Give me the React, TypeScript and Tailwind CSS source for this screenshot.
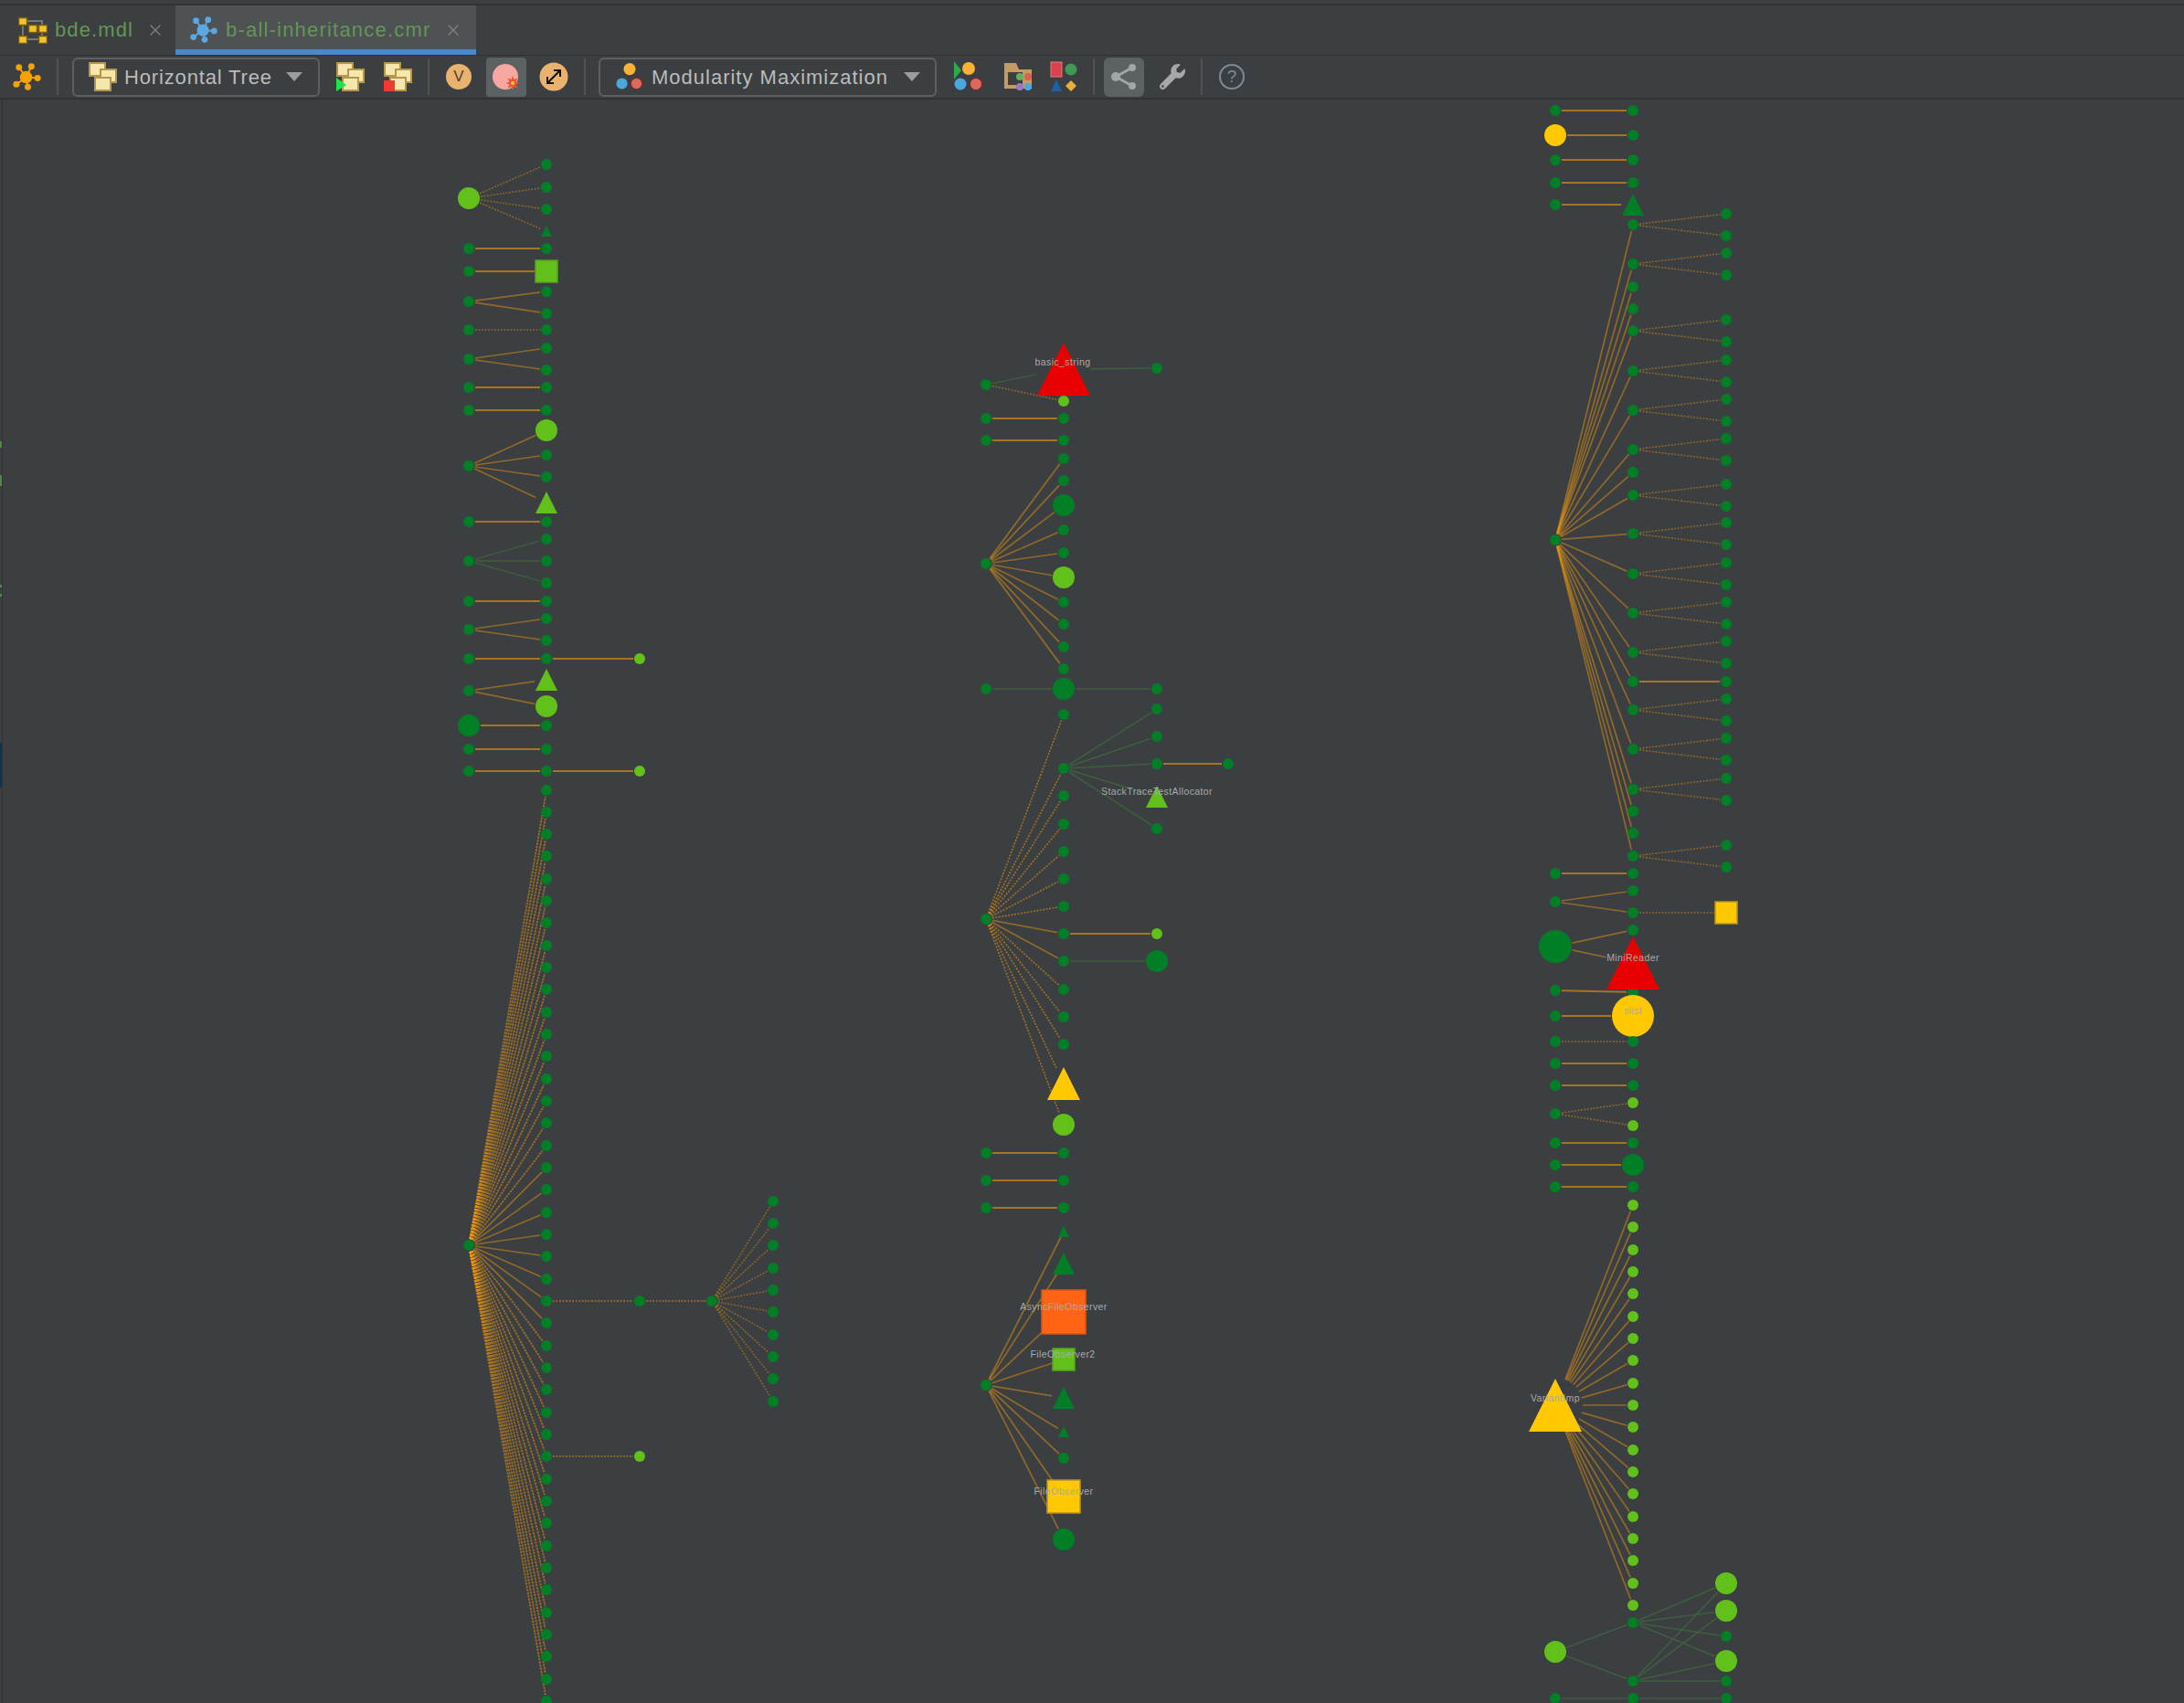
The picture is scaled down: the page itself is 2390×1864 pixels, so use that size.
import React from "react";
import { FaWrench } from "react-icons/fa";
import { X } from "lucide-react";

type Kind = "c" | "s" | "t";
type Style = "solid" | "dash" | "dots" | "fan" | "root" | "green";
type GNode = { x: number; y: number; r: number; kind: Kind; color: string };
type GEdge = { a: GNode; b: GNode; style: Style };

const DARK = "#017f27";
const LIGHT = "#62c01a";
const YELLOW = "#ffc800";
const RED = "#e60000";
const ORANGE = "#ff6414";

const nodes: GNode[] = [];
const edges: GEdge[] = [];

function n(x: number, y: number, r = 6, kind: Kind = "c", color = DARK) {
  const node = { x, y, r, kind, color };
  nodes.push(node);
  return node;
}

function e(a: GNode, b: GNode, style: Style = "solid") {
  edges.push({ a, b, style });
}

function row(x1: number, x2: number, y: number, style: Style = "solid") {
  e(n(x1, y), n(x2, y), style);
}

function fan(a: GNode, x: number, ys: number[], style: Style = "fan") {
  ys.forEach((y) => e(a, n(x, y), style));
}

// left tree
{
  const A = 513;
  const B = 598;
  const C = 700;
  const D = 779;
  const E = 846;
  const top = n(A, 217, 12, "c", LIGHT);
  fan(top, B, [180, 205, 229], "dots");
  e(top, n(B, 253, 6, "t"), "dots");
  row(A, B, 272);
  e(n(A, 297), n(B, 297, 12, "s", LIGHT));
  fan(n(A, 330), B, [319, 343]);
  row(A, B, 361, "dots");
  fan(n(A, 393), B, [381, 405]);
  row(A, B, 424);
  row(A, B, 449);
  const a510 = n(A, 510);
  e(a510, n(B, 471, 12, "c", LIGHT), "fan");
  fan(a510, B, [498, 522]);
  e(a510, n(B, 550, 12, "t", LIGHT), "fan");
  row(A, B, 571);
  fan(n(A, 614), B, [590, 614, 638], "green");
  row(A, B, 658);
  fan(n(A, 689), B, [677, 701]);
  const b721 = n(B, 721);
  e(n(A, 721), b721);
  e(b721, n(C, 721, 6, "c", LIGHT));
  const a756 = n(A, 756);
  e(a756, n(B, 744, 12, "t", LIGHT), "fan");
  e(a756, n(B, 773, 12, "c", LIGHT), "fan");
  e(n(A, 794, 12), n(B, 794));
  row(A, B, 820);
  const b844 = n(B, 844);
  e(n(A, 844), b844);
  e(b844, n(C, 844, 6, "c", LIGHT));

  const root = n(A, 1363);
  for (let i = 0; i < 42; i++) {
    const y = Math.round(864.5 + i * 24.33);
    const b = n(B, y);
    e(root, b, Math.abs(y - 1363) > 90 ? "root" : "fan");
    if (i === 23) {
      const c = n(C, y);
      const d = n(D, y);
      e(b, c, "dash");
      e(c, d, "dash");
      for (let j = 0; j < 10; j++) {
        e(d, n(E, Math.round(1314.6 + j * 24.33)), "dots");
      }
    }
    if (i === 30) e(b, n(C, y, 6, "c", LIGHT), "dash");
  }
}

// middle tree
{
  const A = 1079;
  const B = 1164;
  const C = 1266;
  const D = 1344;
  const tri = n(B, 404, 29, "t", RED);
  e(tri, n(C, 403), "green");
  const a421 = n(A, 421);
  e(a421, tri, "green");
  e(a421, n(B, 439, 6, "c", LIGHT), "dots");
  row(A, B, 458);
  row(A, B, 482);
  const r1 = n(A, 617);
  [502, 526, 580, 605, 659, 683, 708, 732].forEach((y) => e(r1, n(B, y), "fan"));
  e(r1, n(B, 553, 12), "fan");
  e(r1, n(B, 632, 12, "c", LIGHT), "fan");
  const b754 = n(B, 754, 12);
  e(n(A, 754), b754, "green");
  e(b754, n(C, 754), "green");

  const r2 = n(A, 1006);
  e(r2, n(B, 782), "dash");
  const hub = n(B, 841);
  e(r2, hub, "dash");
  [776, 806, 907].forEach((y) => e(hub, n(C, y), "green"));
  const c836 = n(C, 836);
  e(hub, c836, "green");
  e(c836, n(D, 836));
  e(hub, n(C, 872, 12, "t", LIGHT), "green");
  [871, 902, 932, 962, 992, 1083, 1113, 1143].forEach((y) => e(r2, n(B, y), "dash"));
  const b1022 = n(B, 1022);
  e(r2, b1022, "fan");
  e(b1022, n(C, 1022, 6, "c", LIGHT));
  const b1052 = n(B, 1052);
  e(r2, b1052, "fan");
  e(b1052, n(C, 1052, 12), "green");
  e(r2, n(B, 1186, 18, "t", YELLOW), "dash");
  e(r2, n(B, 1231, 12, "c", LIGHT), "dash");
  row(A, B, 1262);
  row(A, B, 1292);
  row(A, B, 1322);

  const r3 = n(A, 1516);
  e(r3, n(B, 1348, 6, "t"), "fan");
  e(r3, n(B, 1383, 12, "t"), "fan");
  e(r3, n(B, 1436, 24, "s", ORANGE), "fan");
  e(r3, n(B, 1488, 12, "s", LIGHT), "fan");
  e(r3, n(B, 1530, 12, "t"), "fan");
  e(r3, n(B, 1567, 6, "t"), "fan");
  e(r3, n(B, 1596), "fan");
  e(r3, n(B, 1638, 18, "s", YELLOW), "fan");
  e(r3, n(B, 1685, 12), "fan");
}

// right tree
{
  const A = 1702;
  const B = 1787;
  const C = 1889;
  row(A, B, 121);
  e(n(A, 148, 12, "c", YELLOW), n(B, 148));
  row(A, B, 175);
  row(A, B, 200);
  e(n(A, 224), n(B, 224, 12, "t"));
  const root = n(A, 591);
  const pairs = [246, 289, 362, 406, 449, 492, 542, 584, 628, 671, 714, 777, 820, 864, 937];
  pairs.forEach((y) => {
    const b = n(B, y);
    e(root, b, "fan");
    fan(b, C, [y - 12, y + 12], "dots");
  });
  [314, 338, 517, 888, 912].forEach((y) => e(root, n(B, y), "fan"));
  const b746 = n(B, 746);
  e(root, b746, "fan");
  e(b746, n(C, 746));

  row(A, B, 956);
  const a987 = n(A, 987);
  e(a987, n(B, 975), "fan");
  const b999 = n(B, 999);
  e(a987, b999, "fan");
  e(b999, n(C, 999, 12, "s", YELLOW), "dots");
  const big = n(A, 1036, 18);
  e(big, n(B, 1018), "fan");
  const under = n(B, 1086);
  e(big, n(B, 1054, 29, "t", RED), "fan");
  e(n(A, 1084), under);
  e(n(A, 1112), n(B, 1112, 23, "c", YELLOW));
  row(A, B, 1140, "dots");
  row(A, B, 1164);
  row(A, B, 1188);
  const a1219 = n(A, 1219);
  e(a1219, n(B, 1207, 6, "c", LIGHT), "dots");
  e(a1219, n(B, 1232, 6, "c", LIGHT), "dots");
  row(A, B, 1251);
  e(n(A, 1275), n(B, 1275, 12));
  row(A, B, 1299);

  const variant = n(A, 1538, 29, "t", YELLOW);
  for (let i = 0; i < 19; i++) {
    e(variant, n(B, Math.round(1319 + i * 24.33), 6, "c", LIGHT), "fan");
  }

  const b1776 = n(B, 1776);
  const b1840 = n(B, 1840);
  const a1808 = n(A, 1808, 12, "c", LIGHT);
  e(a1808, b1776, "green");
  e(a1808, b1840, "green");
  const c1733 = n(C, 1733, 12, "c", LIGHT);
  const c1763 = n(C, 1763, 12, "c", LIGHT);
  const c1818 = n(C, 1818, 12, "c", LIGHT);
  const c1791 = n(C, 1791);
  const c1840 = n(C, 1840);
  [c1733, c1763, c1791, c1818].forEach((c) => e(b1776, c, "green"));
  [c1733, c1763, c1818, c1840].forEach((c) => e(b1840, c, "green"));
  const b1859 = n(B, 1859);
  e(n(A, 1859), b1859, "green");
  e(b1859, n(C, 1859), "green");
}

const labels = [
  { x: 1163, y: 400, text: "basic_string" },
  { x: 1266, y: 870, text: "StackTraceTestAllocator" },
  { x: 1164, y: 1434, text: "AsyncFileObserver" },
  { x: 1163, y: 1486, text: "FileObserver2" },
  { x: 1164, y: 1636, text: "FileObserver" },
  { x: 1787, y: 1052, text: "MiniReader" },
  { x: 1787, y: 1110, text: "slist" },
  { x: 1702, y: 1534, text: "VariantImp" },
];

function edgeProps(style: Style) {
  if (style === "green") return { stroke: "#3f5f3e", strokeWidth: 1.5 };
  if (style === "dash") return { stroke: "#f59a0f", strokeOpacity: 0.55, strokeWidth: 1.6, strokeDasharray: "2 1.5" };
  if (style === "dots") return { stroke: "#f59a0f", strokeOpacity: 0.42, strokeWidth: 1.6, strokeDasharray: "2 1.5" };
  if (style === "root") return { stroke: "#f59a0f", strokeOpacity: 0.5, strokeWidth: 1.8, strokeDasharray: "2.5 1" };
  if (style === "fan") return { stroke: "#f59a0f", strokeOpacity: 0.46, strokeWidth: 1.7 };
  return { stroke: "#f59a0f", strokeOpacity: 0.58, strokeWidth: 2 };
}

// edges stop a pixel or so short of the round nodes
function trimmed(a: GNode, b: GNode) {
  const dx = b.x - a.x;
  const dy = b.y - a.y;
  const len = Math.hypot(dx, dy) || 1;
  const ra = a.r + 1;
  const rb = b.r + 1;
  return {
    x1: a.x + (dx / len) * ra,
    y1: a.y + (dy / len) * ra,
    x2: b.x - (dx / len) * rb,
    y2: b.y - (dy / len) * rb,
  };
}

function Shape({ node }: { node: GNode }) {
  const { x, y, r, kind, color } = node;
  const edge = color === YELLOW ? "#b8951e" : color === ORANGE ? "#d9561a" : color === LIGHT ? "#58a41c" : color;
  if (kind === "s") {
    return <rect x={x - r} y={y - r} width={r * 2} height={r * 2} fill={color} stroke={edge} strokeWidth={1.5} />;
  }
  if (kind === "t") {
    return <polygon points={`${x},${y - r} ${x + r},${y + r} ${x - r},${y + r}`} fill={color} />;
  }
  return <circle cx={x} cy={y} r={r} fill={color} />;
}

function Graph() {
  return (
    <svg className="block h-full w-full" viewBox="0 109 2390 1755">
      {edges.map(({ a, b, style }, i) => (
        <line key={i} {...trimmed(a, b)} {...edgeProps(style)} />
      ))}
      {nodes.map((node, i) => (
        <Shape key={i} node={node} />
      ))}
      {labels.map((l) => (
        <text
          key={l.text}
          x={l.x}
          y={l.y}
          textAnchor="middle"
          fill="#a9a9a9"
          fontSize={10.5}
          letterSpacing={0.4}
          fontFamily="'Liberation Sans', sans-serif"
        >
          {l.text}
        </text>
      ))}
    </svg>
  );
}

function ClusterIcon({ color, className }: { color: string; className: string }) {
  const spots = [
    [8, 6],
    [22, 5],
    [5, 25],
    [18, 28],
    [29, 18],
  ];
  return (
    <svg className={className} viewBox="0 0 34 34">
      {spots.map(([x, y]) => (
        <line key={x} x1={16} y1={17} x2={x} y2={y} stroke={color} strokeWidth={2} />
      ))}
      {spots.map(([x, y]) => (
        <circle key={x} cx={x} cy={y} r={3.6} fill={color} />
      ))}
      <circle cx={16} cy={17} r={7} fill={color} />
    </svg>
  );
}

function ModuleIcon() {
  const boxes = [
    [0, 1],
    [11, 9],
    [22, 9],
    [0, 21],
    [22, 21],
  ];
  return (
    <svg className="h-[30px] w-[32px]" viewBox="0 0 32 30">
      <path d="M5 5H26V25H5V5M15 13H26" fill="none" stroke="#8a8a8a" strokeWidth={1.5} />
      {boxes.map(([x, y]) => (
        <rect key={`${x}-${y}`} x={x + 0.5} y={y + 0.5} width={9} height={8} fill="#f2c42a" stroke="#7a5a10" strokeWidth={1.5} />
      ))}
    </svg>
  );
}

function StackIcon({ badge }: { badge?: "play" | "stop" }) {
  return (
    <svg className="h-[32px] w-[32px]" viewBox="0 0 32 32">
      {[
        [1, 1],
        [13, 8],
        [7, 17],
      ].map(([x, y]) => (
        <rect key={x} x={x} y={y} width={17} height={14} fill="#f6e7ae" stroke="#b5964c" strokeWidth={2} />
      ))}
      {badge === "play" && <path d="M0 17L11 25L0 32Z" fill="#1fe34a" />}
      {badge === "stop" && <rect x={0} y={20} width={12} height={12} fill="#f03a30" />}
    </svg>
  );
}

function TrioIcon({ className }: { className: string }) {
  return (
    <svg className={className} viewBox="0 0 32 34">
      <circle cx={16} cy={8} r={7} fill="#f9b233" />
      <circle cx={7} cy={25} r={6.5} fill="#4aa8df" />
      <circle cx={24} cy={25} r={6.5} fill="#d96a5c" stroke="#8d2020" strokeWidth={1} />
    </svg>
  );
}

function ComboArrow() {
  return <div className="h-0 w-0 border-x-[9px] border-t-[10px] border-x-transparent border-t-[#9a9c9e]" />;
}

function Sep({ className }: { className: string }) {
  return <div className={`h-[40px] w-[2px] bg-[#515354] ${className}`} />;
}

function Tab({ active, icon, name, className, textClass }: { active?: boolean; icon: React.ReactNode; name: string; className: string; textClass: string }) {
  return (
    <div className={`flex h-[54px] items-center ${active ? "border-b-[6px] border-[#4a88c7] bg-[#4e5254]" : ""} ${className}`}>
      {icon}
      <span className={`ml-[8px] text-[22px] leading-none text-[#629755] ${textClass}`}>{name}</span>
      <X className="ml-[14px] h-[20px] w-[20px] text-[#7f8284]" strokeWidth={1.5} />
    </div>
  );
}

export default function App() {
  return (
    <div className="flex h-[1864px] w-[2390px] flex-col overflow-hidden bg-[#3c3f41] font-['Liberation_Sans',sans-serif]">
      <div className="mt-[4px] h-[2px] shrink-0 bg-[#323232]" />
      {/* Tabs */}
      <div className="flex h-[54px] shrink-0 items-stretch pl-[20px]">
        <Tab icon={<ModuleIcon />} name="bde.mdl" className="w-[172px]" textClass="tracking-[1.1px]" />
        <Tab
          active
          icon={<ClusterIcon color="#5aa7e3" className="h-[32px] w-[32px]" />}
          name="b-all-inheritance.cmr"
          className="w-[329px] pl-[15px] pt-[6px]"
          textClass="tracking-[1.2px]"
        />
      </div>
      <div className="h-[1px] shrink-0 bg-[#323232]" />

      {/* Toolbar */}
      <div className="flex h-[48px] shrink-0 items-center border-b-[2px] border-[#323232] pl-[13px]">
        <ClusterIcon color="#f5a300" className="h-[33px] w-[33px]" />
        <Sep className="ml-[16px]" />
        <div className="ml-[15px] flex h-[43px] w-[271px] items-center rounded-[6px] border-2 border-[#5e6060] pl-[16px]">
          <StackIcon />
          <span className="ml-[7px] w-[177px] text-[22px] tracking-[0.85px] whitespace-nowrap text-[#bbbbbb]">Horizontal Tree</span>
          <ComboArrow />
        </div>
        <div className="ml-[18px]">
          <StackIcon badge="play" />
        </div>
        <div className="ml-[20px]">
          <StackIcon badge="stop" />
        </div>
        <Sep className="ml-[16px]" />
        <div className="ml-[18px] flex h-[28px] w-[28px] items-center justify-center rounded-full bg-[#e9b26d] text-[17px] text-[#4f4232]">V</div>
        <div className="ml-[16px] flex h-[43px] w-[44px] items-center justify-center rounded-[4px] bg-[#5c6164]">
          <svg className="h-[30px] w-[30px]" viewBox="0 0 30 30">
            <circle cx={14} cy={15} r={14} fill="#f4a8a0" />
            <path d="M22 14l1.5 4 4-1.5-2 4 4 1.5-4 1.500 2 4-4-1.500-1.500 4-1.500-4-4 1.500 2-4-4-1.500 4-1.500-2-4 4 1.500z" fill="#e8563a" />
            <circle cx={22} cy={22} r={2} fill="#f2c230" />
          </svg>
        </div>
        <svg className="ml-[14px] h-[32px] w-[32px]" viewBox="0 0 32 32">
          <circle cx={16} cy={16} r={15.5} fill="#e9b26d" />
          <path d="M9 23L23 9M16 9h7v7M9 16v7h7" fill="none" stroke="#111111" strokeWidth={2} />
        </svg>
        <Sep className="ml-[17px]" />
        <div className="ml-[14px] flex h-[43px] w-[370px] items-center rounded-[6px] border-2 border-[#5e6060] pl-[17px]">
          <TrioIcon className="h-[34px] w-[30px]" />
          <span className="ml-[9px] w-[276px] text-[22px] tracking-[1px] whitespace-nowrap text-[#bbbbbb]">Modularity Maximization</span>
          <ComboArrow />
        </div>
        <div className="relative ml-[19px] h-[34px] w-[32px]">
          <TrioIcon className="h-[34px] w-[32px]" />
          <div className="absolute top-0 left-0 h-0 w-0 border-y-[10px] border-l-[8px] border-y-transparent border-l-[#2fa84f]" />
        </div>
        <svg className="ml-[22px] h-[34px] w-[32px]" viewBox="0 0 32 34">
          <path d="M1 2H14L17 9H31V30H1Z" fill="#c29c64" />
          <rect x={5} y={12} width={16} height={14} fill="#3c3f41" />
          <circle cx={18} cy={17} r={4} fill="#62b25c" />
          <circle cx={27} cy={17} r={4} fill="#d9604f" />
          <circle cx={18} cy={28} r={4} fill="#9a7cbd" />
          <circle cx={27} cy={28} r={4} fill="#4aa8df" />
        </svg>
        <svg className="ml-[19px] h-[34px] w-[30px]" viewBox="0 0 30 34">
          <rect x={1} y={1} width={12} height={16} fill="#d8434f" stroke="#e77" strokeWidth={1} />
          <circle cx={23} cy={9} r={6.5} fill="#3f9a55" />
          <path d="M7 20L13 33H1Z" fill="#1f5fa8" />
          <path d="M23 21l6 6-6 6-6-6z" fill="#e8b03a" />
        </svg>
        <Sep className="ml-[17px]" />
        <div className="ml-[10px] flex h-[43px] w-[44px] items-center justify-center rounded-[6px] bg-[#5c6164]">
          <svg className="h-[32px] w-[32px]" viewBox="0 0 32 32">
            <path d="M25 6L7 16L25 26" fill="none" stroke="#a3a5a7" strokeWidth={3} />
            <circle cx={25} cy={6} r={4} fill="#a3a5a7" />
            <circle cx={7} cy={16} r={5} fill="#a3a5a7" />
            <circle cx={25} cy={26} r={4} fill="#a3a5a7" />
          </svg>
        </div>
        <FaWrench className="ml-[17px] h-[28px] w-[28px] text-[#a6a8aa]" />
        <Sep className="ml-[17px]" />
        <div className="ml-[18px] flex h-[28px] w-[28px] items-center justify-center rounded-full border-2 border-[#7d8b95] text-[19px] text-[#7d8b95]">?</div>
      </div>

      {/* Graph canvas */}
      <div className="relative min-h-0 flex-1">
        <Graph />
        {/* side strip with the clipped bits of the neighbouring tool window */}
        <div className="absolute inset-y-0 left-[2px] w-[1px] bg-[#313335]" />
        <div className="absolute top-[374px] left-0 h-[7px] w-[2px] bg-[#4f8a45]" />
        <div className="absolute top-[411px] left-0 h-[12px] w-[2px] bg-[#4f8a45]" />
        <div className="absolute top-[531px] left-0 h-[3px] w-[2px] bg-[#4f8a45]" />
        <div className="absolute top-[541px] left-0 h-[3px] w-[2px] bg-[#4f8a45]" />
        <div className="absolute top-[704px] left-0 h-[49px] w-[2px] bg-[#0c3350]" />
      </div>
    </div>
  );
}
